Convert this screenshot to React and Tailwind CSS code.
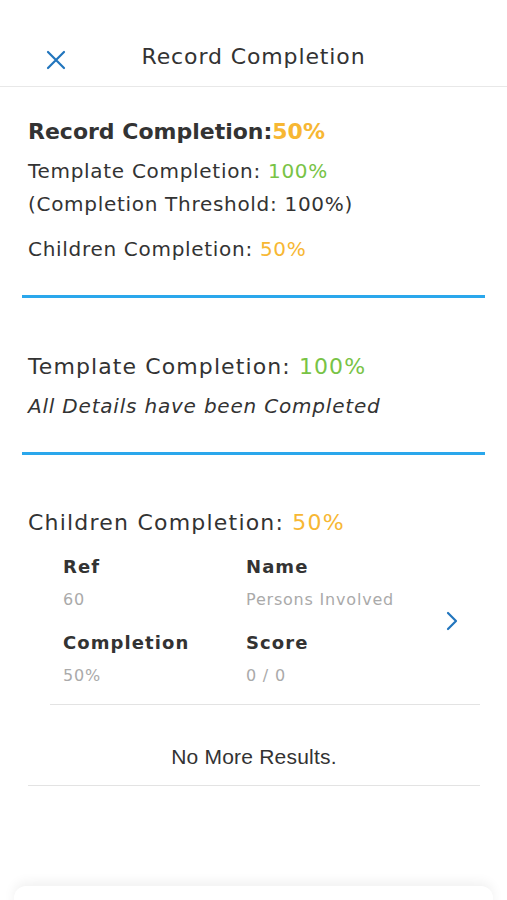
import React from 'react'

const head = { fontFamily: '"DejaVu Sans", "Open Sans", sans-serif' }
const body = { fontFamily: '"DejaVu Sans", "Open Sans", sans-serif' }

function Divider() {
  return <div className="mx-[22px] h-[3px] bg-[#2aa7ec]" />
}

function Field({ label, value }) {
  return (
    <div>
      <div className="text-[18px] font-semibold tracking-[0.06em] text-[#333] leading-[26px]" style={head}>{label}</div>
      <div className="mt-[9px] text-[16px] tracking-[0.05em] text-[#aaa] leading-[22px]" style={body}>{value}</div>
    </div>
  )
}

export default function App() {
  return (
    <div className="relative min-h-[900px] w-[507px] overflow-hidden bg-white text-[#333]">
      {/* header */}
      <div className="relative flex h-[87px] items-end justify-center border-b border-[#e8e8e8] pb-[14px]">
        <svg className="absolute left-[46px] top-[50px]" width="20" height="20" viewBox="0 0 20 20">
          <path d="M2 2 L18 18 M18 2 L2 18" stroke="#2175bd" strokeWidth="2.2" strokeLinecap="round" />
        </svg>
        <h1 className="text-[22px] font-medium leading-[30px] tracking-[0.04em] text-[#333]" style={head}>Record Completion</h1>
      </div>

      {/* summary */}
      <div className="px-[28px] pt-[30px] pb-[32px]">
        <div className="text-[22px] font-bold leading-[30px]" style={head}>
          Record Completion:<span className="text-[#f7b733]">50%</span>
        </div>
        <div className="mt-[8px] text-[20px] leading-[33px] tracking-[0.035em] text-[#333]" style={body}>
          Template Completion: <span className="text-[#78c346]">100%</span>
          <br />
          (Completion Threshold: 100%)
        </div>
        <div className="mt-[14px] text-[20px] leading-[28px] tracking-[0.035em]" style={body}>
          Children Completion: <span className="text-[#f7b733]">50%</span>
        </div>
      </div>
      <Divider />

      {/* template */}
      <div className="px-[28px] pt-[54px] pb-[32px]">
        <div className="text-[22px] leading-[30px] tracking-[0.05em]" style={head}>
          Template Completion: <span className="text-[#78c346]">100%</span>
        </div>
        <div className="mt-[10px] text-[20px] italic leading-[28px] tracking-[0.04em]" style={body}>All Details have been Completed</div>
      </div>
      <Divider />

      {/* children */}
      <div className="pt-[53px]">
        <div className="px-[28px] text-[22px] leading-[30px] tracking-[0.055em]" style={head}>
          Children Completion: <span className="text-[#f7b733]">50%</span>
        </div>
        <div className="ml-[50px] mr-[27px] mt-[16px] flex items-center border-b border-[#e3e3e3] pb-[17px]">
          <div className="grid flex-1 grid-cols-[183px_1fr] gap-y-[19px] pl-[13px]">
            <Field label="Ref" value="60" />
            <Field label="Name" value="Persons Involved" />
            <Field label="Completion" value="50%" />
            <Field label="Score" value="0 / 0" />
          </div>
          <svg className="mr-[22px]" width="12" height="20" viewBox="0 0 12 20">
            <path d="M2 2 L10 10 L2 18" fill="none" stroke="#2175bd" strokeWidth="2.2" strokeLinecap="round" strokeLinejoin="round" />
          </svg>
        </div>
        <div className="ml-[28px] mr-[27px] border-b border-[#e3e3e3] pt-[38px] pb-[14px] text-center text-[21px] leading-[28px] tracking-[0.01em] text-[#333]" style={{ fontFamily: '"Liberation Sans", Arial, sans-serif' }}>
          No More Results.
        </div>
      </div>

      {/* bottom sheet edge */}
      <div className="absolute left-[14px] right-[14px] top-[886px] h-[40px] rounded-t-[12px] bg-white shadow-[0_-4px_12px_rgba(0,0,0,0.06)]" />
    </div>
  )
}
